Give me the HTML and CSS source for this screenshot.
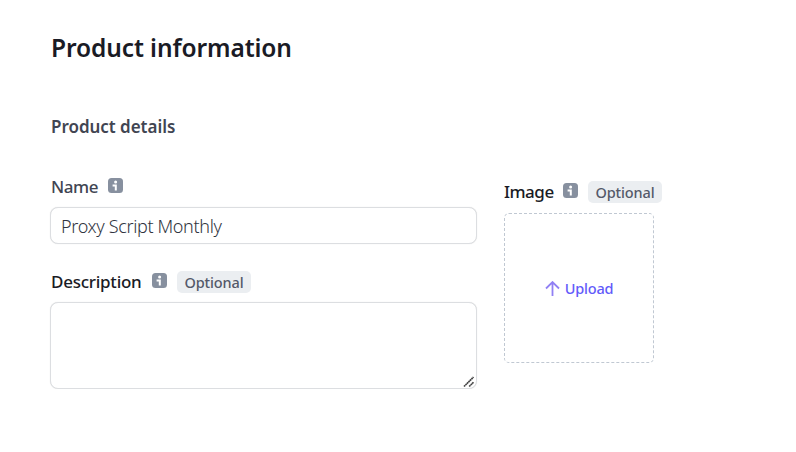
FILE: index.html
```html
<!DOCTYPE html>
<html lang="en">
<head>
<meta charset="utf-8">
<title>Product information</title>
<link rel="stylesheet" href="styles.css">
</head>
<body>
<svg width="0" height="0" class="defs" aria-hidden="true">
  <symbol id="info" viewBox="0 0 15 15">
    <rect width="15" height="15" rx="3.5" fill="#87909f"/>
    <circle cx="7.6" cy="3.9" r="1.5" fill="#fff"/>
    <path d="M4.6 7.5h3.2v5" fill="none" stroke="#fff" stroke-width="2"/>
  </symbol>
</svg>
<main class="page">
  <h1 class="title">Product information</h1>
  <h2 class="subtitle">Product details</h2>
  <div class="columns">
    <form class="fields">
      <div class="label-row">
        <label class="label label-name" for="name">Name</label>
        <svg class="info"><use href="#info"/></svg>
      </div>
      <input class="input" id="name" type="text" value="Proxy Script Monthly">
      <div class="label-row label-row-desc">
        <label class="label label-desc" for="desc">Description</label>
        <svg class="info"><use href="#info"/></svg>
        <span class="badge">Optional</span>
      </div>
      <div class="area-wrap">
        <textarea class="textarea" id="desc"></textarea>
        <svg class="grip" viewBox="0 0 12 12"><path d="M1 10.5L10.5 1M6.2 10.5L10.5 6.2" fill="none" stroke="#444" stroke-width="1.7" stroke-dasharray="1.8 .3"/></svg>
      </div>
    </form>
    <section class="image">
      <div class="label-row">
        <span class="label label-image">Image</span>
        <svg class="info"><use href="#info"/></svg>
        <span class="badge">Optional</span>
      </div>
      <div class="dropzone">
        <svg class="arrow" viewBox="0 0 15 15"><path d="M7.5 15V1.2M1 7.5l6.5-6.4L14 7.5" fill="none" stroke="#9180f4" stroke-width="1.8"/></svg>
        <span class="upload">Upload</span>
      </div>
    </section>
  </div>
</main>
</body>
</html>
```
FILE: styles.css
```css
* { box-sizing: border-box; }
body { margin: 0; background: #fff; font-family: "Noto Sans", "Open Sans", sans-serif; color: #1a1b25; }
.defs { display: none; }
.page { padding: 32px 50px 0; }
.title { margin: 0 0 0 1px; font-size: 24.5px; line-height: 32px; font-weight: 600; color: #1a1b25; letter-spacing: -0.1px; }
.subtitle { margin: 51px 0 0 1px; font-size: 17px; line-height: 24px; font-weight: 600; color: #414552; letter-spacing: -0.03px; }
.columns { display: flex; gap: 27px; margin-top: 36px; }
.fields { width: 427px; }
.image { margin-top: 5px; }
.label-row { display: flex; align-items: center; height: 24px; padding-left: 1px; }
.image .label-row { padding-left: 0; }
.label { font-size: 17px; line-height: 24px; font-weight: 500; white-space: nowrap; }
.label-name { width: 57px; color: #414552; letter-spacing: -0.4px; }
.label-desc { width: 101px; letter-spacing: -0.25px; }
.label-image { width: 59px; letter-spacing: -0.5px; }
.info { width: 15px; height: 15px; margin-top: -3px; flex: none; }
.badge { width: 74px; height: 22px; margin-left: 10px; border-radius: 5px; background: #ebeef1; color: #545969; font-size: 14.5px; line-height: 22px; font-weight: 500; letter-spacing: -0.1px; text-align: center; }
.input, .textarea { display: block; width: 427px; border: 1px solid #dcdee1; border-radius: 8px; background: #fff; box-shadow: 0 0 1px rgba(0, 0, 0, .14); outline: 0; font-family: inherit; }
.input { height: 37px; margin-top: 8px; padding: 0 10px; color: #30343e; font-size: 18px; font-weight: 300; letter-spacing: -0.35px; }
.label-row-desc { margin-top: 26px; }
.area-wrap { position: relative; margin-top: 8px; }
.textarea { height: 87px; resize: none; }
.grip { position: absolute; right: 2px; bottom: 1px; width: 12px; height: 12px; }
.dropzone { display: flex; align-items: center; justify-content: center; gap: 5px; width: 150px; height: 150px; margin-top: 9px; border: 1px dashed #c0c8d2; border-radius: 5px; }
.arrow { width: 15px; height: 15px; }
.upload { color: #625afa; font-size: 14.5px; line-height: 20px; font-weight: 500; letter-spacing: -0.2px; }
```
